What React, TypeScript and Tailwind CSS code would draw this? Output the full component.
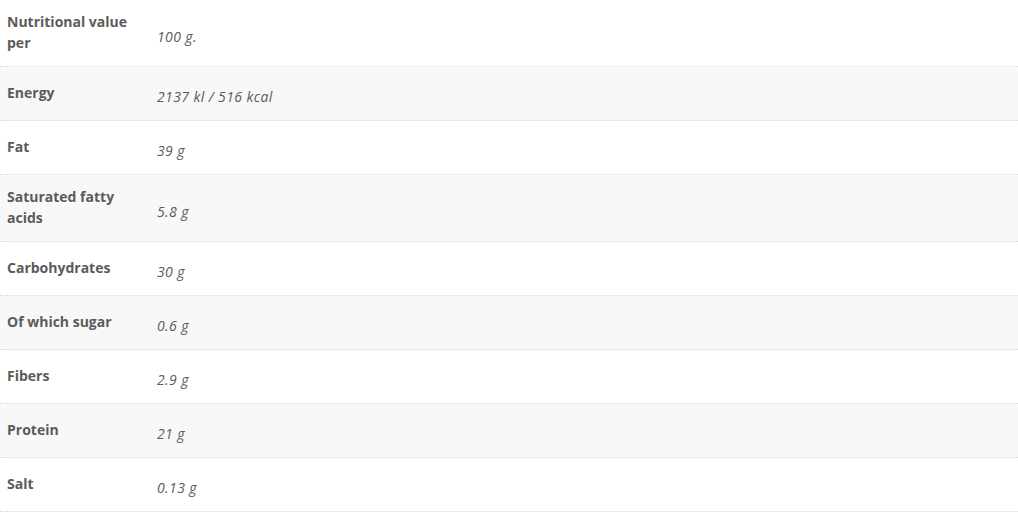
const rows: [string, string][] = [
  ["Nutritional value per", "100 g."],
  ["Energy", "2137 kl / 516 kcal"],
  ["Fat", "39 g"],
  ["Saturated fatty acids", "5.8 g"],
  ["Carbohydrates", "30 g"],
  ["Of which sugar", "0.6 g"],
  ["Fibers", "2.9 g"],
  ["Protein", "21 g"],
  ["Salt", "0.13 g"],
];

export default function App() {
  return (
    <div className="w-[1018px] h-[512px] bg-white font-['Open_Sans',sans-serif] text-[14px] text-[#5b5b5b]">
      {rows.map(([label, value], i) => (
        <div
          key={label}
          className={`flex border-b border-dotted border-[#d9d9d9] ${i % 2 === 1 ? "bg-[#f8f8f8]" : "bg-white"}`}
        >
          <div className="w-[148px] shrink-0 self-center pl-[7px] pr-2 pt-[11px] pb-[13px] leading-[21px] font-bold">
            {label}
          </div>
          <div className="self-center pl-[9px] pt-[19px] pb-[13px] leading-[21px] italic tracking-[0.4px]">
            {value}
          </div>
        </div>
      ))}
    </div>
  );
}
